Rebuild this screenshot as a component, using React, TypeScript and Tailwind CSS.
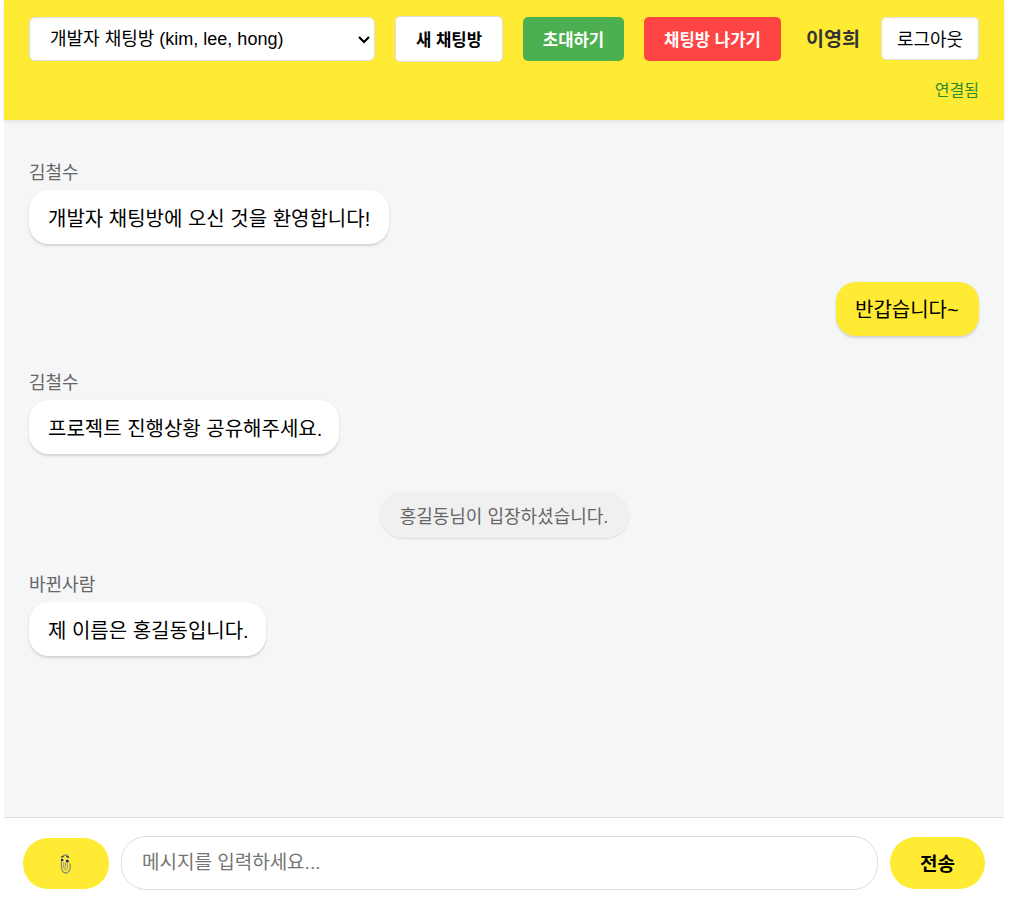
import React, { useState } from "react";

interface ChatMessage {
  id: number;
  kind: "other" | "mine" | "system";
  sender?: string;
  text: string;
  width: string; // bubble width class
}

const messages: ChatMessage[] = [
  {
    id: 1,
    kind: "other",
    sender: "김철수",
    text: "개발자 채팅방에 오신 것을 환영합니다!",
    width: "w-[360px]",
  },
  { id: 2, kind: "mine", text: "반갑습니다~", width: "w-[143px]" },
  {
    id: 3,
    kind: "other",
    sender: "김철수",
    text: "프로젝트 진행상황 공유해주세요.",
    width: "w-[310px]",
  },
  { id: 4, kind: "system", text: "홍길동님이 입장하셨습니다.", width: "w-[249px]" },
  {
    id: 5,
    kind: "other",
    sender: "바뀐사람",
    text: "제 이름은 홍길동입니다.",
    width: "w-[237px]",
  },
];

const PaperclipIcon: React.FC = () => (
  <svg width="12" height="20" viewBox="0 0 12 20" fill="none">
    <path
      d="M1.5 7V14Q2 18.8 5.8 19Q9.6 18.8 10.2 13.5V9.5M8.6 4Q8.2 1 5.8 1Q3.6 1 2.8 2.4"
      stroke="#8c8c80"
      strokeWidth="1.3"
    />
    <path
      d="M3.7 8V13Q4 15.8 5.6 15.8Q7.4 15.8 7.4 13V9M5.5 8.5V13.5"
      stroke="#99998c"
      strokeWidth="1"
    />
    <path d="M1 3.4L3.6 2.2M6.2 2.3L8.8 3.4" stroke="#333" strokeWidth="1.2" />
    <circle cx="2.7" cy="6" r="1.8" fill="#f5f3dc" />
    <circle cx="7.3" cy="6.7" r="2" fill="#f5f3dc" />
    <circle cx="2.2" cy="6" r="1.3" fill="#222" />
    <circle cx="7.3" cy="7" r="1.5" fill="#222" />
  </svg>
);

const Message: React.FC<{ message: ChatMessage }> = ({ message }) => {
  if (message.kind === "system") {
    return (
      <div
        className={`${message.width} mb-[34px] flex h-[46px] items-center justify-center self-center rounded-[23px] bg-[#f0f0f0] pt-1 text-[18px] whitespace-nowrap text-[#666] shadow-[0_1px_2px_rgba(0,0,0,0.1)]`}
      >
        {message.text}
      </div>
    );
  }

  if (message.kind === "mine") {
    return (
      <div
        className={`${message.width} mb-[34px] flex h-[54px] items-center self-end rounded-[20px] bg-[#ffeb33] pt-px pl-[19px] text-[20px] whitespace-nowrap text-black shadow-[0_1.5px_2.5px_rgba(0,0,0,0.14)]`}
      >
        {message.text}
      </div>
    );
  }

  return (
    <div className="mb-[38px] flex flex-col items-start">
      <div className="mb-1 h-[26px] text-[18px] leading-[26px] text-[#666]">{message.sender}</div>
      <div
        className={`${message.width} flex h-[54px] items-center rounded-[20px] bg-white pt-[3px] pl-[19px] text-[20px] whitespace-nowrap text-black shadow-[0_1.5px_2.5px_rgba(0,0,0,0.14)]`}
      >
        {message.text}
      </div>
    </div>
  );
};

const App: React.FC = () => {
  const [draft, setDraft] = useState("");

  return (
    <div className="h-[907px] overflow-hidden bg-white font-['Liberation_Sans','Noto_Sans_CJK_KR',sans-serif]">
      <div className="ml-1 flex h-full w-[1000px] flex-col bg-[#f5f6f8]">
        <header className="relative z-10 h-[120px] bg-[#ffeb33] px-[25px] pt-4 shadow-[0_1px_4px_rgba(0,0,0,0.1)]">
          <div className="flex h-[46px] items-center">
            <div className="relative">
              <select className="block h-[44px] w-[346px] appearance-none rounded-[6px] border border-[#ddd] bg-white pl-5 text-[18px] text-black">
                <option>개발자 채팅방 (kim, lee, hong)</option>
              </select>
              <svg
                className="pointer-events-none absolute top-[19px] right-[5px]"
                width="12"
                height="8"
                viewBox="0 0 12 8"
                fill="none"
              >
                <path d="M1 1L6 6L11 1" stroke="#000" strokeWidth="2.1" />
              </svg>
            </div>
            <button className="ml-5 h-[46px] w-[108px] rounded-[5px] border border-[#ddd] bg-white pt-[3px] text-[16.7px] font-bold whitespace-nowrap text-black">
              새 채팅방
            </button>
            <button className="ml-5 h-[44px] w-[101px] rounded-[5px] bg-[#4caf50] pt-[3px] text-[16.7px] font-bold whitespace-nowrap text-white">
              초대하기
            </button>
            <button className="ml-5 h-[44px] w-[137px] rounded-[5px] bg-[#ff4444] pt-[3px] text-[16.7px] font-bold whitespace-nowrap text-white">
              채팅방 나가기
            </button>
            <span className="ml-[25px] w-[55px] pt-0.5 text-[19.6px] font-bold whitespace-nowrap text-[#333]">
              이영희
            </span>
            <button className="mb-px ml-5 h-[43px] w-[98px] rounded-[5px] border border-[#ddd] bg-white pt-1 text-[18px] whitespace-nowrap text-black">
              로그아웃
            </button>
          </div>
          <div className="mt-[17px] text-right text-[16px] leading-6 text-[#2e8b32]">연결됨</div>
        </header>

        <main className="flex flex-1 flex-col px-[25px] pt-10">
          {messages.map((message) => (
            <Message key={message.id} message={message} />
          ))}
        </main>

        <footer className="flex h-[90px] shrink-0 items-center border-t border-[#ddd] bg-white pl-[19px]">
          <button className="mt-px flex h-[51px] w-[86px] items-center justify-center rounded-[25px] bg-[#ffeb33] pt-0.5">
            <PaperclipIcon />
          </button>
          <input
            value={draft}
            onChange={(e) => setDraft(e.target.value)}
            placeholder="메시지를 입력하세요..."
            className="ml-3 h-[54px] w-[757px] rounded-[25px] border border-[#ddd] bg-white px-5 text-[19px] text-black outline-none placeholder:text-[#757575]"
          />
          <button className="ml-3 h-[52px] w-[95px] rounded-[26px] bg-[#ffeb33] pt-1.5 text-[19px] font-bold text-black">
            전송
          </button>
        </footer>
      </div>
    </div>
  );
};

export default App;
